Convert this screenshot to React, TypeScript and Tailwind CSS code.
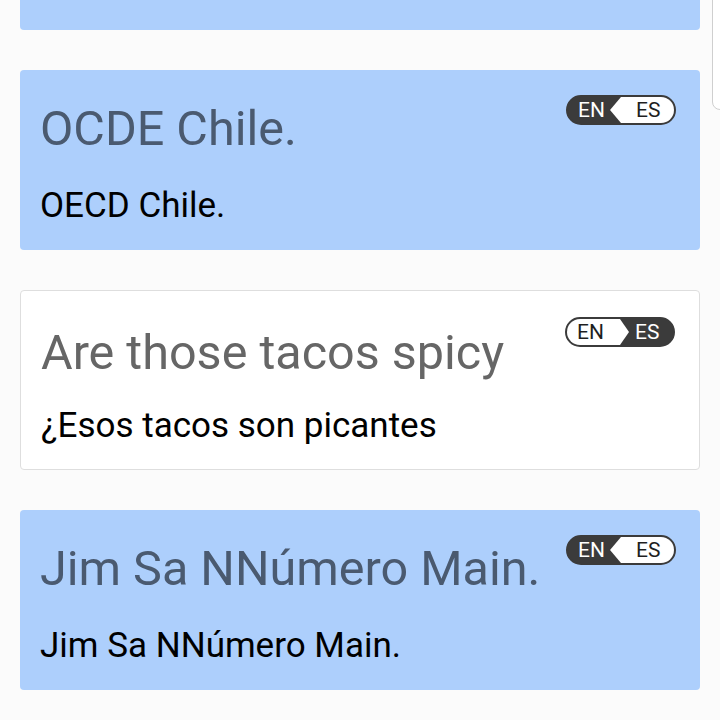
type Lang = "en" | "es";

interface Phrase {
  id: number;
  title: string;
  translation: string;
  active: Lang;
}

const phrases: Phrase[] = [
  { id: 2, title: "OCDE Chile.", translation: "OECD Chile.", active: "es" },
  { id: 3, title: "Are those tacos spicy", translation: "¿Esos tacos son picantes", active: "en" },
  { id: 4, title: "Jim Sa NNúmero Main.", translation: "Jim Sa NNúmero Main.", active: "es" },
];

function LangToggle({ active }: { active: Lang }) {
  const esActive = active === "es";
  return (
    <div className="relative w-[110px] h-[30px] shrink-0 rounded-full border-2 border-[#3b3b3b] bg-[#3b3b3b] overflow-hidden">
      {esActive ? (
        <div className="absolute inset-0 bg-white [clip-path:polygon(53px_0,100%_0,100%_100%,53px_100%,42px_50%)]" />
      ) : (
        <div className="absolute inset-0 bg-white [clip-path:polygon(0_0,53px_0,62px_50%,53px_100%,0_100%)]" />
      )}
      <div className="relative flex h-full items-center text-[21px] leading-none">
        <span className={`w-[54px] pl-[10px] ${esActive ? "text-white" : "text-[#1f1f1f]"}`}>EN</span>
        <span className={`pl-[14px] ${esActive ? "text-[#1f1f1f]" : "text-white"}`}>ES</span>
      </div>
    </div>
  );
}

function PhraseCard({ phrase }: { phrase: Phrase }) {
  const highlighted = phrase.active === "es";
  return (
    <div
      className={`h-[180px] rounded-[4px] px-[20px] ${
        highlighted ? "bg-[#adcffc] pt-[31px]" : "bg-white border border-[#dedede] pt-[34px]"
      }`}
    >
      <div className="flex items-start justify-between">
        <h2
          className={`text-[48.5px] leading-[56px] font-normal ${
            highlighted ? "text-[#4a5a70]" : "text-[#666666]"
          }`}
        >
          {phrase.title}
        </h2>
        <div className={`mr-[4px] ${highlighted ? "mt-[-6px]" : "mt-[-8px]"}`}>
          <LangToggle active={phrase.active} />
        </div>
      </div>
      <p className={`text-[35px] leading-[40px] text-black ${highlighted ? "mt-[29px]" : "mt-[25px]"}`}>
        {phrase.translation}
      </p>
    </div>
  );
}

export default function App() {
  return (
    <div className="relative h-[720px] w-[720px] overflow-hidden bg-[#fbfbfb] font-['Roboto','Liberation_Sans',sans-serif]">
      <div className="flex flex-col gap-10 px-[20px]">
        <div className="h-[30px] rounded-b-[4px] bg-[#adcffc]" />
        {phrases.map((p) => (
          <PhraseCard key={p.id} phrase={p} />
        ))}
      </div>
      <div className="absolute right-[-4px] top-[-8px] h-[118px] w-[12px] rounded-bl-[8px] border border-[#cfcfcf] bg-white" />
    </div>
  );
}
